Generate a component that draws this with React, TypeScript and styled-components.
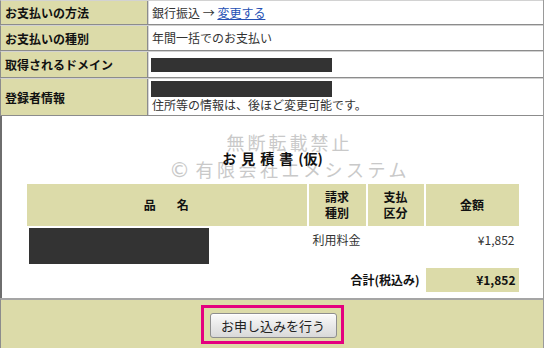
import React from 'react';
import styled, { createGlobalStyle } from 'styled-components';

const KHAKI = '#dcdba9';

const GlobalStyle = createGlobalStyle`
  body {
    margin: 0;
    background: #fff;
    font-family: "Noto Sans CJK JP", "Liberation Sans", sans-serif;
    color: #222;
  }
`;

const Page = styled.div`
  width: 544px;
  box-sizing: border-box;
  border-right: 1px solid #9a9a9a;
`;

const InfoRow = styled.div<{ h: number }>`
  display: flex;
  height: ${({ h }) => h}px;
  box-sizing: border-box;
  border-top: 1px solid #d2d2d2;
  border-bottom: 1px solid #8c8c8c;
  border-left: 1px solid #8c8c8c;
`;

const Label = styled.div`
  width: 147px;
  flex-shrink: 0;
  background: ${KHAKI};
  border-right: 1px solid #8c8c8c;
  display: flex;
  align-items: center;
  padding-left: 4px;
  box-sizing: border-box;
  font-size: 12px;
  font-weight: bold;
  color: #111;
`;

const Value = styled.div`
  flex: 1;
  background: #fff;
  border-left: 1px solid #d6d6d6;
  display: flex;
  flex-direction: column;
  justify-content: center;
  padding-left: 2px;
  font-size: 12px;
  line-height: 16px;
  color: #333;
`;

const ValueText = styled.span`
  padding-left: 1px;
`;

const Link = styled.a`
  color: #2450b4;
  text-decoration: underline;
  cursor: pointer;
`;

const Redacted = styled.div<{ w: number; h: number }>`
  width: ${({ w }) => w}px;
  height: ${({ h }) => h}px;
  background: #333;
  flex-shrink: 0;
`;

const Estimate = styled.section`
  position: relative;
  border-left: 2px solid #6e6e6e;
  padding: 34px 0 6px;
  display: flex;
  flex-direction: column;
  align-items: center;
`;

const Watermark = styled.div`
  position: absolute;
  top: 13px;
  left: 0;
  right: 0;
  padding-left: 34px;
  text-align: center;
  color: #c9c9c9;
  font-size: 18px;
  line-height: 27px;
  font-weight: normal;
  pointer-events: none;
`;

const MarkLine = styled.div<{ spacing: number }>`
  letter-spacing: ${({ spacing }) => spacing}px;
`;

const Copy = styled.span`
  font-family: "DejaVu Sans", sans-serif;
  font-size: 21px;
  margin-right: 2px;
`;

const Title = styled.h2`
  position: relative;
  margin: 0 0 18px;
  font-size: 14px;
  line-height: 16px;
  font-weight: bold;
  color: #111;
`;

const Spaced = styled.span`
  letter-spacing: 5px;
`;

const QuoteGrid = styled.div`
  position: relative;
  width: 492px;
  display: grid;
  grid-template-columns: 280px 57px 56px 93px;
  column-gap: 2px;
  row-gap: 2px;
  font-size: 12px;
  line-height: 16px;
`;

const HeadCell = styled.div<{ wide?: boolean }>`
  height: 42px;
  background: ${KHAKI};
  display: flex;
  align-items: center;
  justify-content: center;
  text-align: center;
  font-weight: bold;
  color: #111;
  letter-spacing: ${({ wide }) => (wide ? '4.5px' : '0')};
  padding-left: ${({ wide }) => (wide ? '4px' : '0')};
`;

const BodyCell = styled.div<{ align?: 'left' | 'right' }>`
  height: 38px;
  box-sizing: border-box;
  padding: 4px 4px 0 ${({ align }) => (align === 'right' ? '0' : '4px')};
  text-align: ${({ align }) => align || 'left'};
  color: #333;
`;

const ItemCell = styled.div`
  height: 38px;
  padding-left: 2px;
`;

const TotalLabel = styled.div`
  grid-column: 1 / span 3;
  height: 24px;
  display: flex;
  align-items: center;
  justify-content: flex-end;
  padding-right: 4px;
  font-weight: bold;
  color: #111;
`;

const TotalAmount = styled.div`
  height: 24px;
  background: ${KHAKI};
  display: flex;
  align-items: center;
  justify-content: flex-end;
  padding-right: 3px;
  font-weight: bold;
  color: #111;
`;

const Footer = styled.footer`
  height: 50px;
  box-sizing: border-box;
  background: ${KHAKI};
  border-top: 2px solid #a5a5a5;
  border-left: 1px solid #8c8c8c;
  padding-top: 5px;
  display: flex;
  justify-content: center;
  align-items: flex-start;
`;

const Highlight = styled.div`
  border: 3px solid #e4007f;
  padding: 4px 4px 3px 6px;
`;

const SubmitButton = styled.button`
  width: 127px;
  height: 25px;
  padding: 0;
  border: 1px solid #8e8e8e;
  border-radius: 3px;
  background: linear-gradient(#fbfbfb, #e9e9e9 50%, #d9d9d9);
  box-shadow: inset 0 1px 0 #fff;
  font-family: "Noto Sans CJK JP", sans-serif;
  font-size: 13px;
  color: #222;
  cursor: pointer;
`;

export default function App() {
  return (
    <>
      <GlobalStyle />
      <Page>
        <InfoRow h={25}>
          <Label>お支払いの方法</Label>
          <Value>
            <ValueText>
              銀行振込 → <Link>変更する</Link>
            </ValueText>
          </Value>
        </InfoRow>
        <InfoRow h={26}>
          <Label>お支払いの種別</Label>
          <Value>
            <ValueText>年間一括でのお支払い</ValueText>
          </Value>
        </InfoRow>
        <InfoRow h={27}>
          <Label>取得されるドメイン</Label>
          <Value>
            <Redacted w={181} h={14} />
          </Value>
        </InfoRow>
        <InfoRow h={38}>
          <Label>登録者情報</Label>
          <Value>
            <Redacted w={181} h={16} />
            <ValueText>住所等の情報は、後ほど変更可能です。</ValueText>
          </Value>
        </InfoRow>

        <Estimate>
          <Watermark>
            <MarkLine spacing={3}>無断転載禁止</MarkLine>
            <MarkLine spacing={3.5}>
              <Copy>©</Copy>有限会社エメシステム
            </MarkLine>
          </Watermark>
          <Title>
            <Spaced>お見積書</Spaced>(仮)
          </Title>
          <QuoteGrid>
            <HeadCell wide>品　名</HeadCell>
            <HeadCell>
              請求
              <br />
              種別
            </HeadCell>
            <HeadCell>
              支払
              <br />
              区分
            </HeadCell>
            <HeadCell>金額</HeadCell>

            <ItemCell>
              <Redacted w={180} h={36} />
            </ItemCell>
            <BodyCell>利用料金</BodyCell>
            <BodyCell />
            <BodyCell align="right">¥1,852</BodyCell>

            <TotalLabel>合計(税込み)</TotalLabel>
            <TotalAmount>¥1,852</TotalAmount>
          </QuoteGrid>
        </Estimate>

        <Footer>
          <Highlight>
            <SubmitButton type="button">お申し込みを行う</SubmitButton>
          </Highlight>
        </Footer>
      </Page>
    </>
  );
}
